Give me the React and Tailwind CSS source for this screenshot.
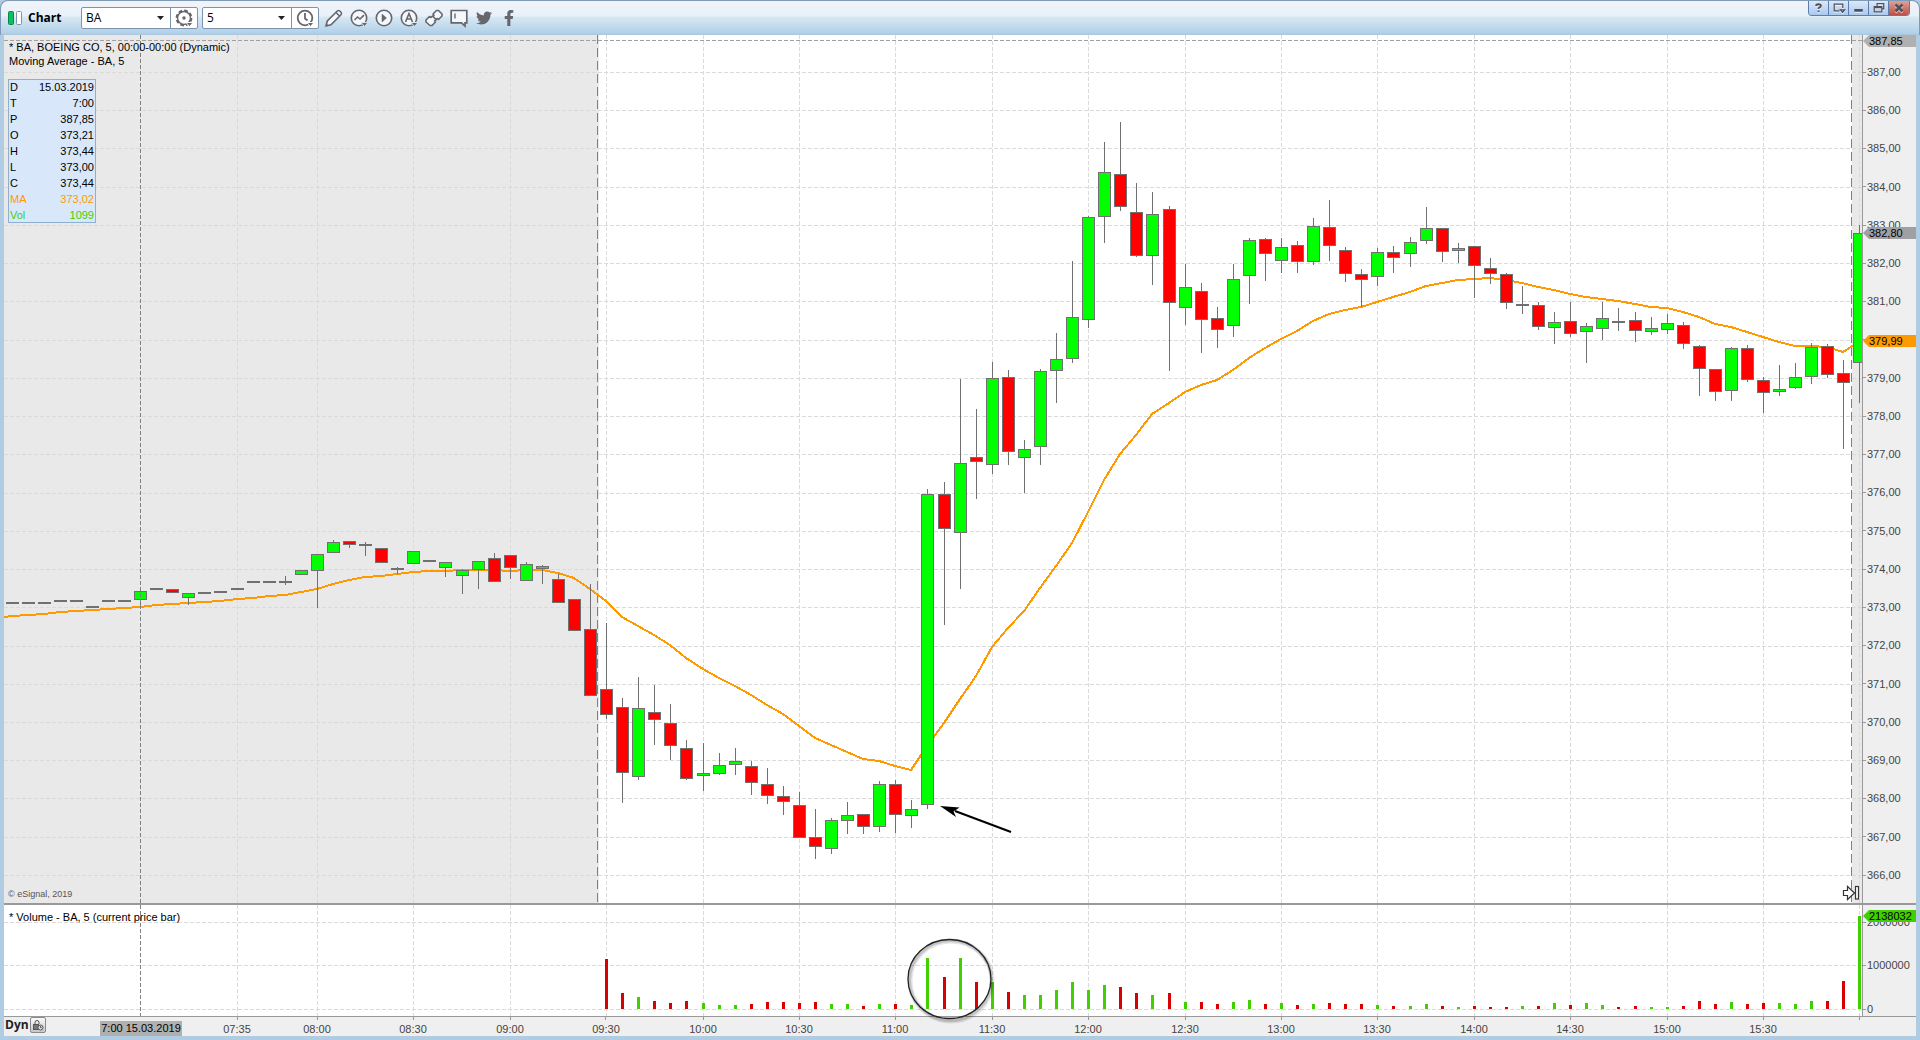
import React from "react";
import { FaTwitter, FaFacebookF } from "react-icons/fa";

/* Plot geometry: x runs 4..1862, the price pane 35..903, the volume pane 905..1016. */
const LEFT = 4;
const WIDTH = 1858;
const barX = (i) => Math.round(606.125 + i * 16.0685);
const pct = (x) => ((x - LEFT) / WIDTH) * 100 + "%";

/* [first index, high, open/close top, open/close bottom, low, colour]; "d" is a flat bar */
const CANDLES = [
  [-37, 603, 603, 603, 603, "d"], [-36, 603, 603, 603, 603, "d"], [-35, 603, 603, 603, 603, "d"],
  [-34, 601, 601, 601, 601, "d"], [-33, 601, 601, 601, 601, "d"], [-32, 607, 607, 607, 607, "d"],
  [-31, 601, 601, 601, 601, "d"], [-30, 601, 601, 601, 601, "d"], [-29, 591, 591, 599, 608, "g"],
  [-28, 589, 589, 589, 589, "d"], [-27, 589, 589, 592, 592, "r"], [-26, 593, 593, 597, 605, "g"],
  [-25, 593, 593, 593, 593, "d"], [-24, 592, 592, 592, 592, "d"], [-23, 589, 589, 589, 589, "d"],
  [-22, 582, 582, 582, 582, "d"], [-21, 582, 582, 582, 582, "d"], [-20, 576, 582, 582, 585, "d"],
  [-19, 570, 570, 574, 574, "g"], [-18, 554, 554, 570, 608, "g"], [-17, 540, 542, 552, 552, "g"],
  [-16, 541, 541, 544, 548, "r"], [-15, 542, 545, 545, 556, "d"], [-14, 548, 548, 562, 562, "r"],
  [-13, 567, 569, 569, 574, "d"], [-12, 551, 551, 563, 563, "g"], [-11, 561, 561, 561, 561, "d"],
  [-10, 562, 562, 567, 577, "g"], [-9, 569, 570, 575, 594, "g"], [-8, 561, 561, 569, 589, "g"],
  [-7, 553, 558, 581, 581, "r"], [-6, 555, 555, 567, 579, "r"], [-5, 562, 564, 580, 580, "g"],
  [-4, 565, 566, 568, 584, "g"], [-3, 574, 579, 602, 602, "r"], [-2, 599, 599, 630, 630, "r"],
  [-1, 584, 629, 695, 695, "r"], [0, 623, 689, 714, 719, "r"], [1, 698, 707, 772, 803, "r"],
  [2, 677, 708, 776, 780, "g"], [3, 685, 712, 719, 745, "r"], [4, 704, 723, 745, 760, "r"],
  [5, 740, 748, 778, 780, "r"], [6, 743, 773, 775, 791, "g"], [7, 753, 765, 773, 775, "g"],
  [8, 748, 761, 764, 775, "g"], [9, 761, 766, 782, 795, "r"], [10, 768, 784, 795, 804, "r"],
  [11, 786, 796, 801, 815, "r"], [12, 792, 805, 837, 837, "r"], [13, 809, 837, 846, 859, "r"],
  [14, 818, 820, 848, 854, "g"], [15, 802, 815, 820, 834, "g"], [16, 814, 814, 826, 834, "r"],
  [17, 781, 784, 826, 832, "g"], [18, 780, 784, 814, 833, "r"], [19, 800, 809, 815, 828, "g"],
  [20, 489, 494, 804, 809, "g"], [21, 482, 494, 528, 625, "r"], [22, 379, 463, 532, 589, "g"],
  [23, 409, 457, 461, 499, "r"], [24, 362, 378, 464, 474, "g"], [25, 370, 377, 451, 465, "r"],
  [26, 440, 449, 457, 493, "g"], [27, 369, 371, 446, 465, "g"], [28, 333, 359, 370, 403, "g"],
  [29, 261, 317, 358, 363, "g"], [30, 216, 217, 319, 328, "g"], [31, 142, 172, 216, 243, "g"],
  [32, 122, 174, 206, 211, "r"], [33, 183, 212, 255, 257, "r"], [34, 192, 214, 255, 285, "g"],
  [35, 206, 209, 302, 371, "r"], [36, 264, 287, 307, 325, "g"], [37, 283, 291, 319, 353, "r"],
  [38, 307, 318, 329, 348, "r"], [39, 264, 279, 325, 337, "g"], [40, 238, 240, 275, 304, "g"],
  [41, 238, 239, 253, 281, "r"], [42, 238, 247, 260, 273, "g"], [43, 241, 245, 261, 273, "r"],
  [44, 218, 226, 261, 265, "g"], [45, 200, 227, 245, 261, "r"], [46, 247, 250, 273, 282, "r"],
  [47, 269, 274, 279, 307, "r"], [48, 248, 252, 276, 286, "g"], [49, 246, 252, 257, 273, "r"],
  [50, 237, 242, 253, 267, "g"], [51, 207, 228, 240, 244, "g"], [52, 228, 228, 251, 262, "r"],
  [53, 243, 248, 250, 263, "g"], [54, 246, 246, 265, 298, "r"], [55, 258, 268, 273, 284, "r"],
  [56, 273, 274, 302, 309, "r"], [57, 286, 305, 305, 314, "d"], [58, 302, 305, 326, 330, "r"],
  [59, 312, 322, 327, 344, "g"], [60, 302, 321, 333, 337, "r"], [61, 323, 326, 331, 363, "g"],
  [62, 302, 318, 328, 340, "g"], [63, 308, 322, 322, 331, "d"], [64, 312, 320, 330, 342, "r"],
  [65, 317, 328, 331, 335, "g"], [66, 314, 323, 329, 334, "g"], [67, 322, 325, 343, 349, "r"],
  [68, 345, 346, 368, 396, "r"], [69, 369, 369, 391, 401, "r"], [70, 347, 348, 390, 401, "g"],
  [71, 345, 348, 379, 382, "r"], [72, 377, 380, 392, 413, "r"], [73, 365, 389, 391, 396, "g"],
  [74, 363, 377, 387, 389, "g"], [75, 343, 347, 376, 384, "g"], [76, 344, 346, 374, 378, "r"],
  [77, 360, 373, 382, 449, "r"], [78, 225, 233, 362, 403, "g"],
];

/* Moving average, one value per bar from index -37 */
const AVERAGE = [
  616, 615, 614, 612, 611, 610, 609, 608, 607, 605, 604, 603, 602, 601, 599, 598, 596, 595, 592,
  589, 584, 580, 577, 576, 574, 572, 571, 571, 570, 570, 570, 571, 570, 570, 573, 578, 589, 601,
  617, 626, 635, 645, 658, 669, 678, 686, 695, 705, 714, 726, 738, 745, 752, 759, 761, 766, 770,
  746, 723, 699, 676, 647, 628, 611, 588, 566, 543, 512, 480, 454, 435, 414, 403, 392, 385, 380,
  370, 358, 348, 339, 331, 321, 314, 310, 307, 302, 297, 292, 286, 283, 280, 279, 278, 280, 283,
  287, 290, 294, 297, 299, 301, 304, 307, 308, 312, 317, 324, 327, 332, 337, 342, 346, 346, 347,
  352, 342,
];

/* Volume bars from index 0: height in pixels and colour */
const VOLUMES =
  "50r 16r 12g 8r 6r 8r 6g 4g 4g 5r 7r 7r 6r 7r 5g 5g 3r 5g 5r 4g 51g 32r 51g 27r 27g 17r 14g 14g 19g 27g 19g 24g 22r 16r 14g 16r 7g 7r 5r 7g 9g 5r 6g 4r 5g 6r 5r 5r 4g 3r 3g 5g 3r 2g 3r 2r 2r 3g 3r 6g 4r 6g 4g 2r 3r 2g 2g 3r 8r 5r 7g 5r 6r 6g 5g 8g 8r 28r 93g"
    .split(" ")
    .map((s) => [parseInt(s, 10), s.slice(-1)]);

const TIMES = [
  [-23, "07:35"], [-18, "08:00"], [-12, "08:30"], [-6, "09:00"], [0, "09:30"], [6, "10:00"],
  [12, "10:30"], [18, "11:00"], [24, "11:30"], [30, "12:00"], [36, "12:30"], [42, "13:00"],
  [48, "13:30"], [54, "14:00"], [60, "14:30"], [66, "15:00"], [72, "15:30"],
];
const GRID_X = [...TIMES.map(([i]) => barX(i)), barX(78)];
const PRICES = Array.from({ length: 22 }, (_, k) => 387 - k);
const priceRow = (k) => Math.round(72 + 38.235 * k) + 0.5;

const GRID = "#dadada";
const EDGE = "#707070";
const FILL = { g: "#00ff00", r: "#ff0000" };

function Candle({ bar }) {
  const [i, high, top, bottom, low, kind] = bar;
  const x = barX(i);
  return (
    <g>
      {low > high && <rect x={x} y={high} width="1" height={low - high} fill={EDGE} />}
      {kind === "d" ? (
        <rect x={x - 6} y={top - 1} width="13" height="2" fill={EDGE} />
      ) : (
        <rect x={x - 5.5} y={top + 0.5} width="12" height={bottom - top} fill={FILL[kind]} stroke={EDGE} />
      )}
    </g>
  );
}

function PricePlot() {
  const points = AVERAGE.map((y, k) => `${barX(k - 37)},${y}`).join(" ");
  return (
    <svg
      className="absolute inset-0 h-full w-full"
      viewBox="4 35 1858 868"
      preserveAspectRatio="none"
      shapeRendering="crispEdges"
      aria-label="Price candles"
    >
      <rect x="4" y="35" width="595" height="868" fill="#e9e9e9" />
      <rect x="1852" y="35" width="10" height="868" fill="#e9e9e9" />
      <g stroke={GRID} strokeDasharray="4 2">
        {PRICES.map((p, k) => (
          <line key={p} x1="4" x2="1862" y1={priceRow(k)} y2={priceRow(k)} />
        ))}
        {GRID_X.map((x) => (
          <line key={x} x1={x + 0.5} x2={x + 0.5} y1="35" y2="903" />
        ))}
      </g>
      <line x1="4" x2="1862" y1="40.5" y2="40.5" stroke="#a0a0a0" strokeDasharray="4 2" />
      <g stroke="#808080" strokeDasharray="9 4">
        <line x1="597.5" x2="597.5" y1="35" y2="903" />
        <line x1="1851.5" x2="1851.5" y1="35" y2="903" />
      </g>
      <polyline points={`4,617 ${points}`} fill="none" stroke="#ff9900" strokeWidth="2" />
      {CANDLES.map((bar) => (
        <Candle key={bar[0]} bar={bar} />
      ))}
      <line x1="140.5" x2="140.5" y1="35" y2="903" stroke="#808080" strokeDasharray="4 2" />
      <g shapeRendering="auto">
        <line x1="955" y1="811" x2="1011" y2="832" stroke="#000" strokeWidth="2" />
        <polygon points="940,806 959.5,807.5 953.5,811.5 956,817" fill="#000" />
      </g>
      <g shapeRendering="auto" fill="#fff" stroke="#333" strokeWidth="1.2">
        <path d="M1843.5 890.5h4v-4l7 6.500-7 6.500v-4h-4z" />
        <rect x="1855.500" y="886.500" width="3" height="12.500" />
      </g>
    </svg>
  );
}

function VolumePlot() {
  return (
    <svg
      className="absolute inset-0 h-full w-full overflow-visible"
      viewBox="4 905 1858 111"
      preserveAspectRatio="none"
      shapeRendering="crispEdges"
      aria-label="Volume bars"
    >
      <g stroke={GRID} strokeDasharray="4 2">
        {[922.5, 965.5, 1009.5].map((y) => (
          <line key={y} x1="4" x2="1862" y1={y} y2={y} />
        ))}
        {GRID_X.map((x) => (
          <line key={x} x1={x + 0.5} x2={x + 0.5} y1="905" y2="1016" />
        ))}
      </g>
      <line x1="140.5" x2="140.5" y1="905" y2="1016" stroke="#808080" strokeDasharray="4 2" />
      {VOLUMES.map(([h, kind], i) => (
        <rect key={i} x={barX(i) - 1} y={1009 - h} width="3" height={h} fill={kind === "g" ? "#40d000" : "#d80000"} />
      ))}
      <g fill="none" shapeRendering="auto">
        <ellipse cx="951" cy="981" rx="41" ry="40" stroke="#000" strokeOpacity="0.1" strokeWidth="5" />
        <ellipse cx="950.500" cy="980.500" rx="41" ry="40" stroke="#000" strokeOpacity="0.15" strokeWidth="3" />
        <ellipse cx="949.500" cy="979" rx="41.500" ry="39.500" stroke="#222" strokeWidth="1.300" />
      </g>
    </svg>
  );
}

const TAG = "absolute left-0 right-0 flex h-3 items-center pl-[6px] leading-3 text-black [clip-path:polygon(0_50%,6px_0,100%_0,100%_100%,6px_100%)]";

function AxisLabel({ children }) {
  return (
    <div className="flex flex-1 items-center gap-px">
      <span className="h-px w-[3px] bg-[#999]" />
      <span>{children}</span>
    </div>
  );
}

const INFO = [
  ["D", "15.03.2019"], ["T", "7:00"], ["P", "387,85"], ["O", "373,21"], ["H", "373,44"],
  ["L", "373,00"], ["C", "373,44"], ["MA", "373,02", "text-[#ff9900]"], ["Vol", "1099", "text-[#40d000]"],
];

const TOOLS = {
  gear: (
    <>
      <circle cx="10" cy="10" r="6.500" strokeWidth="1.400" />
      <circle cx="10" cy="10" r="7.300" strokeWidth="2.200" strokeDasharray="3.700 2.030" />
      <circle cx="10" cy="10" r="1.700" fill="#66666c" stroke="none" />
      <path d="M12 14.500h7l-3.500 4z" fill="#66666c" stroke="#fff" strokeWidth="1" />
    </>
  ),
  clock: (
    <>
      <circle cx="10" cy="10" r="7.300" strokeWidth="1.800" />
      <path d="M10 5v5.500l2.500 2" strokeWidth="1.800" />
      <path d="M12 14.500h7l-3.500 4z" fill="#66666c" stroke="#fff" strokeWidth="1" />
    </>
  ),
  pencil: (
    <>
      <path d="M2 18l1.300-5L13.300 3q1.200-1 2.400 0l1.300 1.300q1 1.200 0 2.400L7 16.700z" fill="#f4f7fb" />
      <path d="M12 4.500l3.500 3.500M2.300 17.500l1.800-.4" />
    </>
  ),
  study: (
    <>
      <circle cx="10" cy="10" r="7.700" fill="#f4f7fb" />
      <path d="M5.500 12l3-3 2.500 2 4-3.800" strokeWidth="1.600" />
      <path d="M12 14.500h7l-3.500 4z" fill="#66666c" stroke="#d5e5f2" strokeWidth="1" />
    </>
  ),
  play: (
    <>
      <circle cx="10" cy="10" r="7.700" fill="#f4f7fb" />
      <path d="M8 6l4.500 4L8 14z" fill="#66666c" strokeWidth="0.500" />
    </>
  ),
  annotate: (
    <>
      <circle cx="10" cy="10" r="7.700" fill="#f4f7fb" />
      <path d="M6.500 14L10 5.500l3.500 8.500M7.800 11h4.400" />
      <path d="M12 14.500h7l-3.500 4z" fill="#66666c" stroke="#d5e5f2" strokeWidth="1" />
    </>
  ),
  link: (
    <g fill="#f4f7fb" strokeLinejoin="round">
      <path d="M9 6l3.500-3.500h2l3.500 3.500v2l-3.500 3.500-1-1-2 1.500-3-3 1.500-1.500z" />
      <path d="M2 12l3.500-3.500 1.500 1 1.500-1.500 3.500 3.500-1.500 1.500 1 1-3.500 3.500h-2l-4-3.500z" />
    </g>
  ),
  note: (
    <>
      <path d="M2.200 2.500h15.600v12.300h-1.800v3.200l-3.500-3.200h-10.300z" fill="#f4f7fb" strokeWidth="1.700" />
      <path d="M6 5.500v5" strokeWidth="1.400" />
    </>
  ),
};

function ToolIcon({ name }) {
  return (
    <svg className="size-5" viewBox="0 0 20 20" fill="none" stroke="#66666c" strokeWidth="1.600" aria-hidden="true">
      {TOOLS[name]}
    </svg>
  );
}

function Combo({ label, value, icon, action }) {
  return (
    <div className="flex h-[22px] rounded-[2px] border border-[#7e93ad] bg-white">
      <div className="relative">
        <select
          aria-label={label}
          defaultValue={value}
          className="h-5 w-[88px] appearance-none bg-transparent pl-1 text-[12px] leading-5 text-black outline-none"
        >
          <option>{value}</option>
        </select>
        <svg className="pointer-events-none absolute right-[6px] top-[8px] h-1 w-[7px]" viewBox="0 0 7 4" aria-hidden="true">
          <path d="M0 0h7L3.500 4z" fill="#222" />
        </svg>
      </div>
      <button aria-label={action} className="flex w-[27px] items-center justify-center border-l border-[#7e93ad]">
        <ToolIcon name={icon} />
      </button>
    </div>
  );
}

const WINDOW_BUTTONS = [
  ["Help", <path key="h" d="M7.500 4.500q0-2 2.500-2t2.500 1.700q0 1.200-1.300 1.700T10 7.500M10 9v1.800" strokeWidth="2" />],
  ["Dock", <path key="d" d="M11 9.500H5.500v-7h9v4M12 8.500h4.500l-2.200 2.500z" strokeWidth="1.300" />],
  ["Minimize", <path key="m" d="M5.500 9h9" strokeWidth="3" />],
  ["Restore", <path key="r" d="M8.500 4.500v-2.500h7v5.500h-2M5.500 5h8v5.500h-8zM5.500 6h8" strokeWidth="1.300" />],
  ["Close", <path key="c" d="M6.500 3l7 7M13.500 3l-7 7" strokeWidth="2.500" />],
];

export default function App() {
  return (
    <div className="flex h-screen flex-col overflow-hidden bg-[#b0cce3] font-['Liberation_Sans',Arial,sans-serif] text-[11px] text-black">
      <header className="flex h-[35px] shrink-0 items-center rounded-t-lg border-l border-r border-t border-[#7f9ab5] bg-[linear-gradient(to_bottom,#f0f4fa_0,#e8f0f8_15px,#d8e8f4_16px,#b2d1e8_32px,#a6c6de_34px)] pl-[7px] pr-[9px]">
        <svg className="h-[14px] w-[14px]" viewBox="0 0 14 14" aria-hidden="true">
          <rect x="0.500" y="0.500" width="5" height="13" rx="1" fill="#0cc060" stroke="#078a48" />
          <rect x="8.500" y="0.500" width="5" height="13" rx="1" fill="#fff" stroke="#7e93ad" />
        </svg>
        <h1 className="ml-[6px] w-[53px] font-['Open_Sans',sans-serif] text-[12px] font-bold">Chart</h1>
        <div className="flex gap-1 font-['Open_Sans',sans-serif]">
          <Combo label="Symbol" value="BA" icon="gear" action="Symbol settings" />
          <Combo label="Interval" value="5" icon="clock" action="Time template" />
        </div>
        <div className="ml-[5px] flex gap-[5px] text-[#66666c]">
          {[["Draw", "pencil"], ["Studies", "study"], ["Playback", "play"], ["Annotate", "annotate"], ["Link", "link"], ["Note", "note"]].map(
            ([label, icon]) => (
              <button key={icon} aria-label={label} className="size-5">
                <ToolIcon name={icon} />
              </button>
            )
          )}
          <button aria-label="Twitter" className="flex size-5 items-center justify-center">
            <FaTwitter size={16} />
          </button>
          <button aria-label="Facebook" className="flex size-5 items-center justify-center">
            <FaFacebookF size={16} />
          </button>
        </div>
        <div className="ml-auto flex h-[15px] self-start overflow-hidden rounded-b border border-t-0 border-[#5c7cae]">
          {WINDOW_BUTTONS.map(([label, shape], k) => (
            <button
              key={label}
              aria-label={label}
              className={
                k === 4
                  ? "h-full w-5 bg-linear-to-b from-[#dba29c] to-[#bd4f45]"
                  : "h-full w-5 border-r border-[#5c7cae] bg-linear-to-b from-[#dce9f8] to-[#a9c9ef]"
              }
            >
              <svg className="h-[14px] w-full" viewBox="0 0 20 13" fill="none" aria-hidden="true">
                <g stroke="#fff" strokeOpacity="0.700" transform="translate(0 1)">{shape}</g>
                <g stroke="#505058">{shape}</g>
              </svg>
            </button>
          ))}
        </div>
      </header>

      <main className="flex min-h-0 flex-1 flex-col border-b-4 border-l-4 border-r-4 border-[#b0cce3] bg-[#efefef]">
        <section className="flex min-h-0 flex-1">
          <div className="relative min-w-0 flex-1 bg-white">
            <PricePlot />
            <div className="absolute left-[5px] top-[5px] leading-[14px]">
              <p>* BA, BOEING CO, 5, 00:00-00:00 (Dynamic)</p>
              <p>Moving Average - BA, 5</p>
            </div>
            <table className="absolute left-1 top-11 w-[88px] border-collapse bg-[#d8e8fa] shadow-[inset_0_0_0_1px_#8fafd0]">
              <tbody>
                {INFO.map(([name, value, tone]) => (
                  <tr key={name} className={tone}>
                    <th scope="row" className="p-0 pl-[2px] text-left font-normal leading-4">{name}</th>
                    <td className="p-0 pr-[2px] text-right leading-4">{value}</td>
                  </tr>
                ))}
              </tbody>
            </table>
            <p className="absolute bottom-[2px] left-1 text-[9px] leading-[14px] text-[#555]">© eSignal, 2019</p>
          </div>
          <aside className="relative flex w-[54px] shrink-0 flex-col border-l border-[#999] pb-[9px] pt-[18px] text-[#444]">
            {PRICES.map((p) => (
              <AxisLabel key={p}>{p},00</AxisLabel>
            ))}
            <span className={TAG + " top-0 bg-[#b0b0b0]"}>387,85</span>
            <span className={TAG + " top-[22.120%] bg-[#a0a0a4]"}>382,80</span>
            <span className={TAG + " top-[34.560%] bg-[#ff9900]"}>379,99</span>
          </aside>
        </section>

        <section className="flex h-[114px] shrink-0 border-b border-t-2 border-[#999]">
          <div className="relative z-10 min-w-0 flex-1 bg-white">
            <VolumePlot />
            <p className="absolute left-[5px] top-[5px] leading-[14px]">* Volume - BA, 5 (current price bar)</p>
          </div>
          <aside className="relative flex w-[54px] shrink-0 flex-col border-l border-[#999] text-[#444]">
            <div className="flex h-[35px] shrink-0 items-center">
              <AxisLabel>2000000</AxisLabel>
            </div>
            <div className="flex h-[51px] shrink-0 items-center">
              <AxisLabel>1000000</AxisLabel>
            </div>
            <div className="flex h-9 shrink-0 items-center">
              <AxisLabel>0</AxisLabel>
            </div>
            <span className={TAG + " top-[5px] bg-[#40d000]"}>2138032</span>
          </aside>
        </section>

        <footer className="relative flex h-[19px] shrink-0 items-center pr-[54px] text-[#444]">
          <div className="relative h-full flex-1">
            {TIMES.map(([i, label]) => (
              <div key={label} className="absolute top-0 flex w-10 -translate-x-1/2 flex-col items-center" style={{ left: pct(barX(i)) }}>
                <span className="h-[3px] w-px bg-[#999]" />
                <span className="mt-[3px] leading-3">{label}</span>
              </div>
            ))}
            <span className="absolute top-0 h-[3px] w-px bg-[#999]" style={{ left: pct(barX(78)) }} />
            <span className="absolute bottom-0 h-[15px] w-[82px] -translate-x-1/2 bg-[#b0b0b0] text-center leading-[15px] text-black" style={{ left: pct(141) }}>
              7:00 15.03.2019
            </span>
            <div className="absolute left-px top-0 flex items-center gap-px">
              <span className="font-['Open_Sans',sans-serif] text-[12px] font-bold leading-4 text-[#222]">Dyn</span>
              <button aria-label="Lock time axis" className="flex size-4 items-center justify-center rounded-[2px] border border-[#8a8a8a] bg-linear-to-b from-[#fafafa] to-[#c8c8c8]">
                <svg className="size-3" viewBox="0 0 12 12" fill="none" stroke="#555" aria-hidden="true">
                  <path d="M3 6V3.500a2 2 0 0 1 4 0V5" />
                  <rect x="1.500" y="5.500" width="5" height="5" fill="#777" />
                  <circle cx="8.500" cy="8.500" r="2.500" fill="#ddd" />
                  <path d="M8.500 7v1.500h1.200" />
                </svg>
              </button>
            </div>
          </div>
        </footer>
      </main>
    </div>
  );
}
